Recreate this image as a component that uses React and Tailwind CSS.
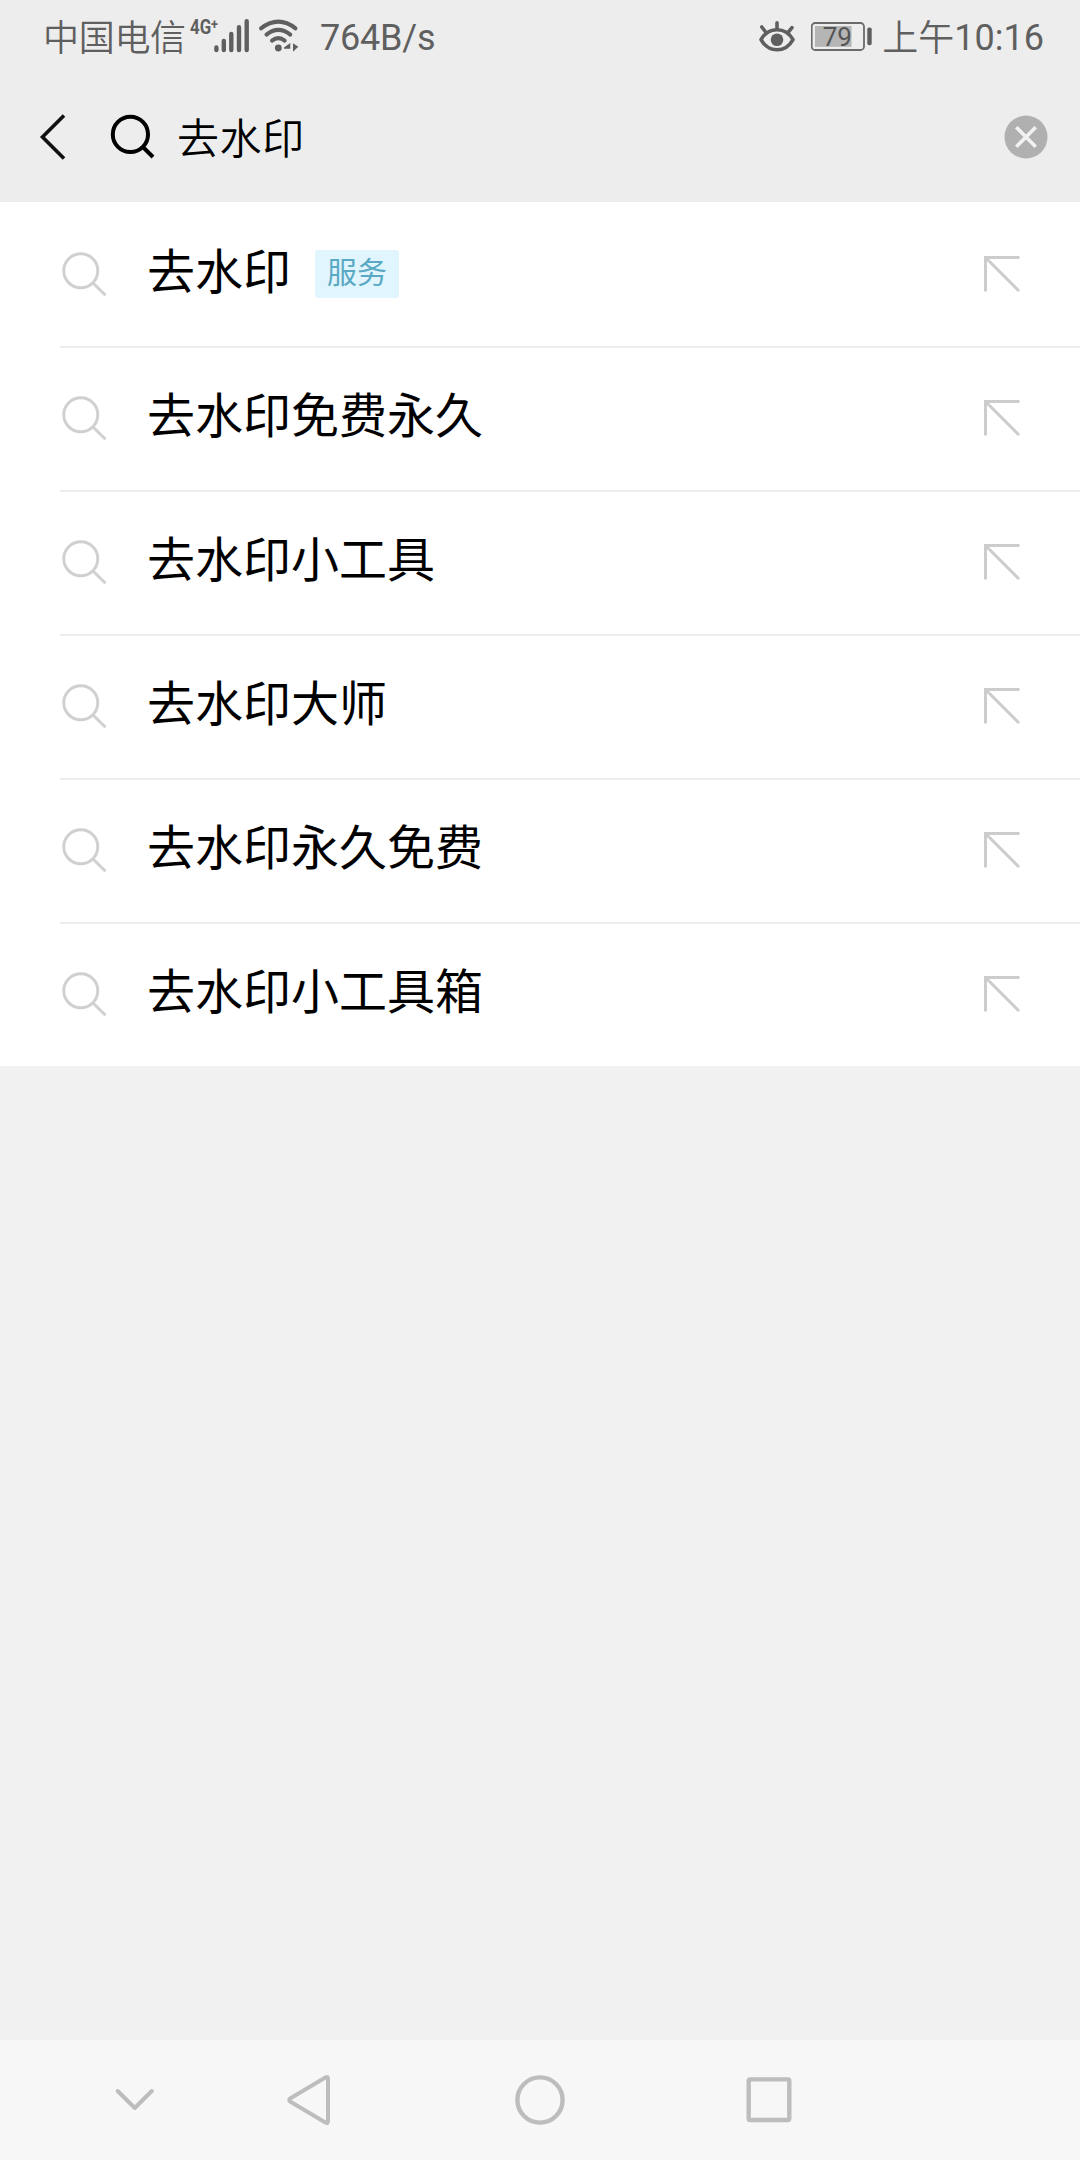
import React from "react";

const suggestions = [
  { text: "去水印", tag: "服务" },
  { text: "去水印免费永久" },
  { text: "去水印小工具" },
  { text: "去水印大师" },
  { text: "去水印永久免费" },
  { text: "去水印小工具箱" },
];

const SignalIcons = () => (
  <svg className="w-[132px] h-[72px] shrink-0" viewBox="186 0 132 72" fill="none">
    <text
      x="190"
      y="34"
      fontSize="20"
      fontFamily="Roboto, sans-serif"
      fontWeight="700"
      fill="#5f5f5f"
      textLength="28"
      lengthAdjust="spacingAndGlyphs"
    >
      4G<tspan dy="-5.5" fontSize="15">+</tspan>
    </text>
    <g stroke="#5f5f5f" strokeWidth="4.4" strokeLinecap="round">
      <path d="M216.4 47.5V50M223.8 41V50M231.3 34V50M239 27.2V50M246.7 21.2V50" />
    </g>
    <g stroke="#5f5f5f" strokeWidth="4" strokeLinecap="round">
      <path d="M261 28.3Q278.5 15 295.5 28.3" />
      <path d="M266.5 34.6Q278.3 25.2 290.3 34.6" />
      <path d="M272 40.6Q278.3 35.6 284.7 40.6" />
    </g>
    <circle cx="278.3" cy="48" r="3.4" fill="#5f5f5f" />
    <path d="M284 47.5L290.3 43V52V48.8H284ZM293 43.2L298.3 46.8L293 51.8Z" fill="#5f5f5f" />
  </svg>
);

const EyeIcon = () => (
  <svg className="w-[36px] h-[72px] shrink-0" viewBox="760 0 36 72" fill="none">
    <path
      d="M762 39.6C769.5 26.4 786.5 26.4 794 39.6C786.5 53.2 769.5 53.2 762 39.6Z"
      stroke="#5f5f5f"
      strokeWidth="3.6"
      strokeLinejoin="round"
    />
    <circle cx="778" cy="39.8" r="6.3" fill="#5f5f5f" />
    <path
      d="M778 22.8V29M762.8 27L767 32.5M793 27.6L789 32.5"
      stroke="#5f5f5f"
      strokeWidth="3.6"
      strokeLinecap="round"
    />
  </svg>
);

const BatteryIcon = () => (
  <svg className="w-[62px] h-[72px] ml-[16px] shrink-0" viewBox="812 0 62 72" fill="none">
    <rect x="812.7" y="23" width="52.3" height="27" rx="3.5" stroke="#6a6a6a" strokeWidth="1.8" />
    <rect x="816" y="26" width="36.5" height="20.8" fill="#b5b5b5" />
    <rect x="868.3" y="27.5" width="4.4" height="17.7" rx="1.8" fill="#5f5f5f" />
    <text x="823.7" y="45.7" fontSize="26" fontFamily="Roboto, sans-serif" fontWeight="400" fill="#555555">
      79
    </text>
  </svg>
);

const StatusBar = () => (
  <div className="flex h-[72px] items-center pl-[43px] text-[36px] leading-[70px] font-[350] text-[#5f5f5f] whitespace-nowrap">
    <span className="w-[143px] pt-[5px] tracking-[-0.3px]">中国电信</span>
    <SignalIcons />
    <span className="ml-[2px] pt-[4px] font-normal tracking-[-0.2px]">764B/s</span>
    <div className="flex items-center ml-auto pr-[36px]">
      <EyeIcon />
      <BatteryIcon />
      <span className="ml-[9px] pt-[5px]">上午</span>
      <span className="pt-[4px] font-normal">10:16</span>
    </div>
  </div>
);

const SearchHeader = () => (
  <div className="flex h-[130px] items-center pl-[38px] pr-[32px]">
    <svg className="w-[30px] h-[50px]" viewBox="38 112 30 50" fill="none">
      <path d="M64 115.5L42.5 137L64 158.5" stroke="#111111" strokeWidth="3.6" />
    </svg>
    <svg className="w-[50px] h-[50px] ml-[40px]" viewBox="108 112 50 50" fill="none">
      <circle cx="130.4" cy="134.4" r="17.6" stroke="#000000" strokeWidth="4" />
      <path d="M142.6 146.8L153 157" stroke="#000000" strokeWidth="4" />
    </svg>
    <span className="ml-[19px] pt-[5px] text-[42px] tracking-[0.6px] leading-[60px] font-[350] text-black">
      去水印
    </span>
    <svg className="w-[44px] h-[44px] ml-auto" viewBox="0 0 44 44" fill="none">
      <circle cx="22" cy="22" r="21.5" fill="#b0b0b0" />
      <path d="M12.3 12.3L31.7 31.7M31.7 12.3L12.3 31.7" stroke="#f2f2f2" strokeWidth="3.6" />
    </svg>
  </div>
);

const SuggestionRow = ({ text, tag, first }) => (
  <div
    className={`flex h-[144px] items-center ml-[60px] pr-[60px] ${
      first ? "" : "border-t-2 border-[#ececec] pb-[2px]"
    }`}
  >
    <svg className="w-[48px] h-[48px]" viewBox="0 0 48 48" fill="none" stroke="#d0d0d0" strokeWidth="3">
      <circle cx="20.8" cy="20.8" r="17" />
      <path d="M33 33L45.5 45.2" />
    </svg>
    <span className="ml-[39px] pb-[2px] text-[48px] leading-[64px] text-black">{text}</span>
    {tag && (
      <span className="ml-[24px] w-[84px] h-[48px] rounded-[3px] bg-[#e1f5fe] text-center text-[30px] leading-[46px] text-[#5aa9c4]">
        {tag}
      </span>
    )}
    <svg className="w-[36px] h-[36px] ml-auto" viewBox="0 0 36 36" fill="none" stroke="#cccccc" strokeWidth="3">
      <path d="M35.5 1.5H1.5V35.5M1.5 1.5L35 35" />
    </svg>
  </div>
);

const NavBar = () => (
  <div className="flex h-[120px] items-center bg-[#f7f7f7] pl-[110px]">
    <svg className="w-[50px] h-[50px]" viewBox="110 2075 50 50" fill="none">
      <path
        d="M117.7 2091L134.8 2108L151.8 2091"
        stroke="#bdbdbd"
        strokeWidth="4"
        strokeLinecap="round"
        strokeLinejoin="round"
      />
    </svg>
    <svg className="w-[52px] h-[52px] ml-[123px]" viewBox="283 2074 52 52" fill="none">
      <path
        d="M325.8 2077.3Q328 2076.3 328 2078.8V2121.2Q328 2123.7 325.8 2122.7L290.5 2101.8Q288 2100 290.5 2098.2Z"
        stroke="#bdbdbd"
        strokeWidth="4"
        strokeLinejoin="round"
      />
    </svg>
    <svg className="w-[52px] h-[52px] ml-[179px]" viewBox="0 0 52 52" fill="none">
      <circle cx="26" cy="26" r="22.6" stroke="#bdbdbd" strokeWidth="4.4" />
    </svg>
    <svg className="w-[52px] h-[52px] ml-[177px]" viewBox="743 2074 52 52" fill="none">
      <rect x="748.7" y="2079.4" width="40.6" height="40.6" rx="1.5" stroke="#bdbdbd" strokeWidth="4.4" />
    </svg>
  </div>
);

const App = () => {
  return (
    <div className="flex flex-col w-[1080px] h-[2160px] overflow-hidden bg-[#f1f1f1] font-['Roboto','Noto_Sans_CJK_SC',sans-serif]">
      <div className="bg-[#ededed]">
        <StatusBar />
        <SearchHeader />
      </div>
      <div className="bg-white">
        {suggestions.map((item, i) => (
          <SuggestionRow key={item.text} text={item.text} tag={item.tag} first={i === 0} />
        ))}
      </div>
      <div className="flex-1" />
      <NavBar />
    </div>
  );
};

export default App;
